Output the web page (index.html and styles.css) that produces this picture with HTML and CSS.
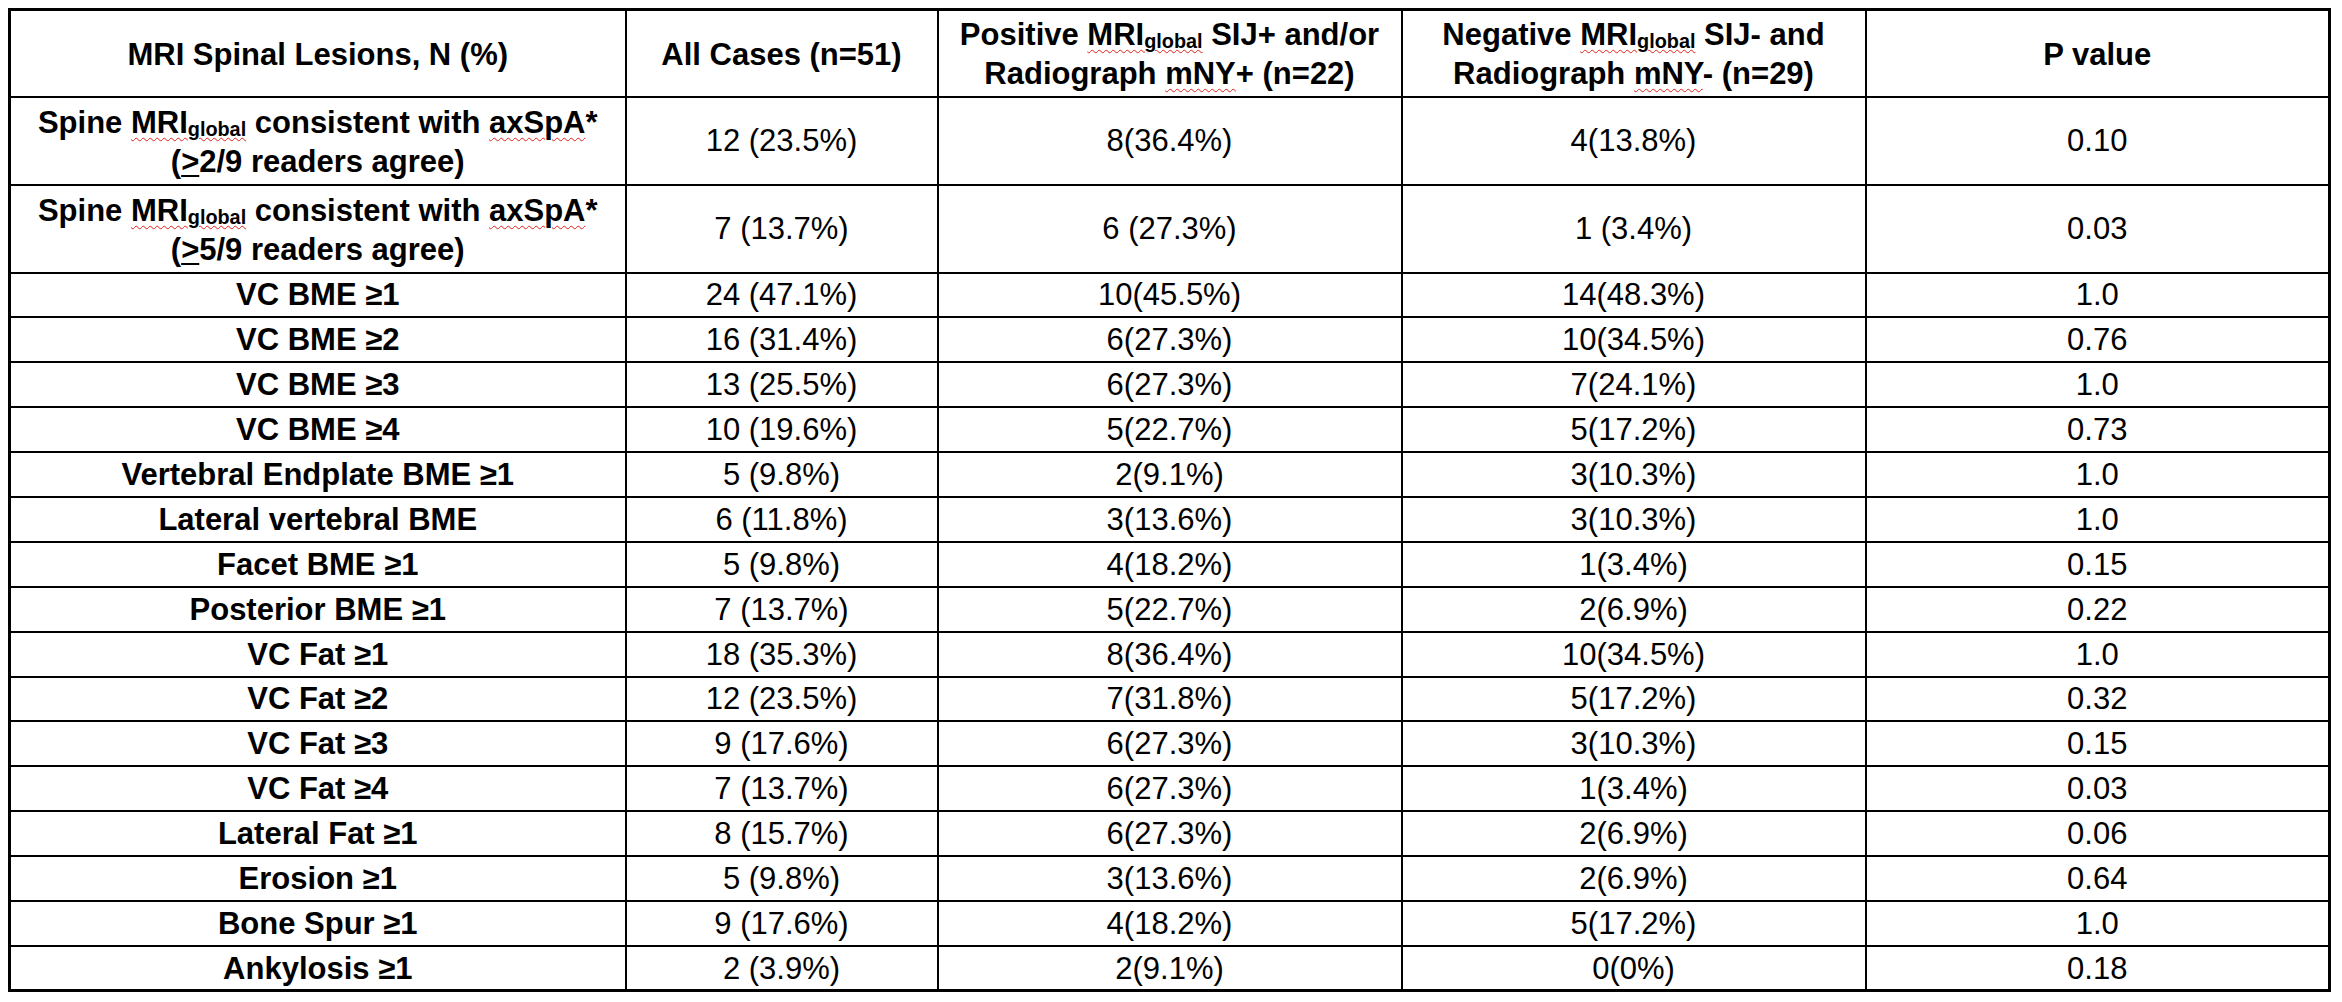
FILE: index.html
```html
<!DOCTYPE html>
<html>
<head>
<meta charset="utf-8">
<link rel="stylesheet" href="styles.css">
</head>
<body>
<div class="page">
<table class="data">
  <colgroup>
    <col class="c1"><col class="c2"><col class="c3"><col class="c4"><col class="c5">
  </colgroup>
  <thead>
    <tr class="head">
      <th>MRI Spinal Lesions, N (%)</th>
      <th>All Cases (n=51)</th>
      <th>Positive <span class="sq">MRI<span class="sub">global</span></span> SIJ+ and/or<br>Radiograph <span class="sq">mNY</span>+ (n=22)</th>
      <th>Negative <span class="sq">MRI<span class="sub">global</span></span> SIJ- and<br>Radiograph <span class="sq">mNY</span>- (n=29)</th>
      <th>P value</th>
    </tr>
  </thead>
  <tbody>
    <tr class="tall">
      <th>Spine <span class="sq">MRI<span class="sub">global</span></span> consistent with <span class="sq">axSpA</span>*<br>(<span class="ul">&gt;</span>2/9 readers agree)</th>
      <td>12 (23.5%)</td><td>8(36.4%)</td><td>4(13.8%)</td><td>0.10</td>
    </tr>
    <tr class="tall">
      <th>Spine <span class="sq">MRI<span class="sub">global</span></span> consistent with <span class="sq">axSpA</span>*<br>(<span class="ul">&gt;</span>5/9 readers agree)</th>
      <td>7 (13.7%)</td><td>6 (27.3%)</td><td>1 (3.4%)</td><td>0.03</td>
    </tr>
    <tr><th>VC BME ≥1</th><td>24 (47.1%)</td><td>10(45.5%)</td><td>14(48.3%)</td><td>1.0</td></tr>
    <tr><th>VC BME ≥2</th><td>16 (31.4%)</td><td>6(27.3%)</td><td>10(34.5%)</td><td>0.76</td></tr>
    <tr><th>VC BME ≥3</th><td>13 (25.5%)</td><td>6(27.3%)</td><td>7(24.1%)</td><td>1.0</td></tr>
    <tr><th>VC BME ≥4</th><td>10 (19.6%)</td><td>5(22.7%)</td><td>5(17.2%)</td><td>0.73</td></tr>
    <tr><th>Vertebral Endplate BME ≥1</th><td>5 (9.8%)</td><td>2(9.1%)</td><td>3(10.3%)</td><td>1.0</td></tr>
    <tr><th>Lateral vertebral BME</th><td>6 (11.8%)</td><td>3(13.6%)</td><td>3(10.3%)</td><td>1.0</td></tr>
    <tr><th>Facet BME ≥1</th><td>5 (9.8%)</td><td>4(18.2%)</td><td>1(3.4%)</td><td>0.15</td></tr>
    <tr><th>Posterior BME ≥1</th><td>7 (13.7%)</td><td>5(22.7%)</td><td>2(6.9%)</td><td>0.22</td></tr>
    <tr><th>VC Fat ≥1</th><td>18 (35.3%)</td><td>8(36.4%)</td><td>10(34.5%)</td><td>1.0</td></tr>
    <tr><th>VC Fat ≥2</th><td>12 (23.5%)</td><td>7(31.8%)</td><td>5(17.2%)</td><td>0.32</td></tr>
    <tr><th>VC Fat ≥3</th><td>9 (17.6%)</td><td>6(27.3%)</td><td>3(10.3%)</td><td>0.15</td></tr>
    <tr><th>VC Fat ≥4</th><td>7 (13.7%)</td><td>6(27.3%)</td><td>1(3.4%)</td><td>0.03</td></tr>
    <tr><th>Lateral Fat ≥1</th><td>8 (15.7%)</td><td>6(27.3%)</td><td>2(6.9%)</td><td>0.06</td></tr>
    <tr><th>Erosion ≥1</th><td>5 (9.8%)</td><td>3(13.6%)</td><td>2(6.9%)</td><td>0.64</td></tr>
    <tr><th>Bone Spur ≥1</th><td>9 (17.6%)</td><td>4(18.2%)</td><td>5(17.2%)</td><td>1.0</td></tr>
    <tr><th>Ankylosis ≥1</th><td>2 (3.9%)</td><td>2(9.1%)</td><td>0(0%)</td><td>0.18</td></tr>
  </tbody>
</table>
</div>
</body>
</html>
```
FILE: styles.css
```css
html, body {
  margin: 0;
  padding: 0;
  background: #ffffff;
}
.page {
  padding: 8px 0 0 8px;
}
.data {
  border-collapse: collapse;
  table-layout: fixed;
  width: 2321px;
  border: 3px solid #000;
  font-family: "Liberation Sans", Arial, sans-serif;
  font-size: 31px;
  color: #000;
}
.c1 { width: 616px; }
.c2 { width: 312px; }
.c3 { width: 464px; }
.c4 { width: 464px; }
.c5 { width: 464px; }
.data th, .data td {
  border: 2px solid #000;
  padding: 0 2px;
  text-align: center;
  vertical-align: middle;
  line-height: 39px;
  white-space: nowrap;
  overflow: hidden;
}
.data th {
  font-weight: bold;
}
.data td {
  font-weight: normal;
}
.head { height: 87px; }
.data tbody tr { height: 44.9px; }
.data tbody tr.tall { height: 88px; }
.tall th { padding-top: 3px; }
.head th { padding-top: 2px; }
.sub {
  font-size: 0.64em;
  vertical-align: -0.14em;
  line-height: 0;
}
.sq {
  text-decoration: underline wavy #e0201b;
  text-decoration-thickness: 1px;
  text-underline-offset: 4px;
}
.ul {
  text-decoration: underline;
  text-decoration-thickness: 2px;
  text-underline-offset: 3px;
}
```
